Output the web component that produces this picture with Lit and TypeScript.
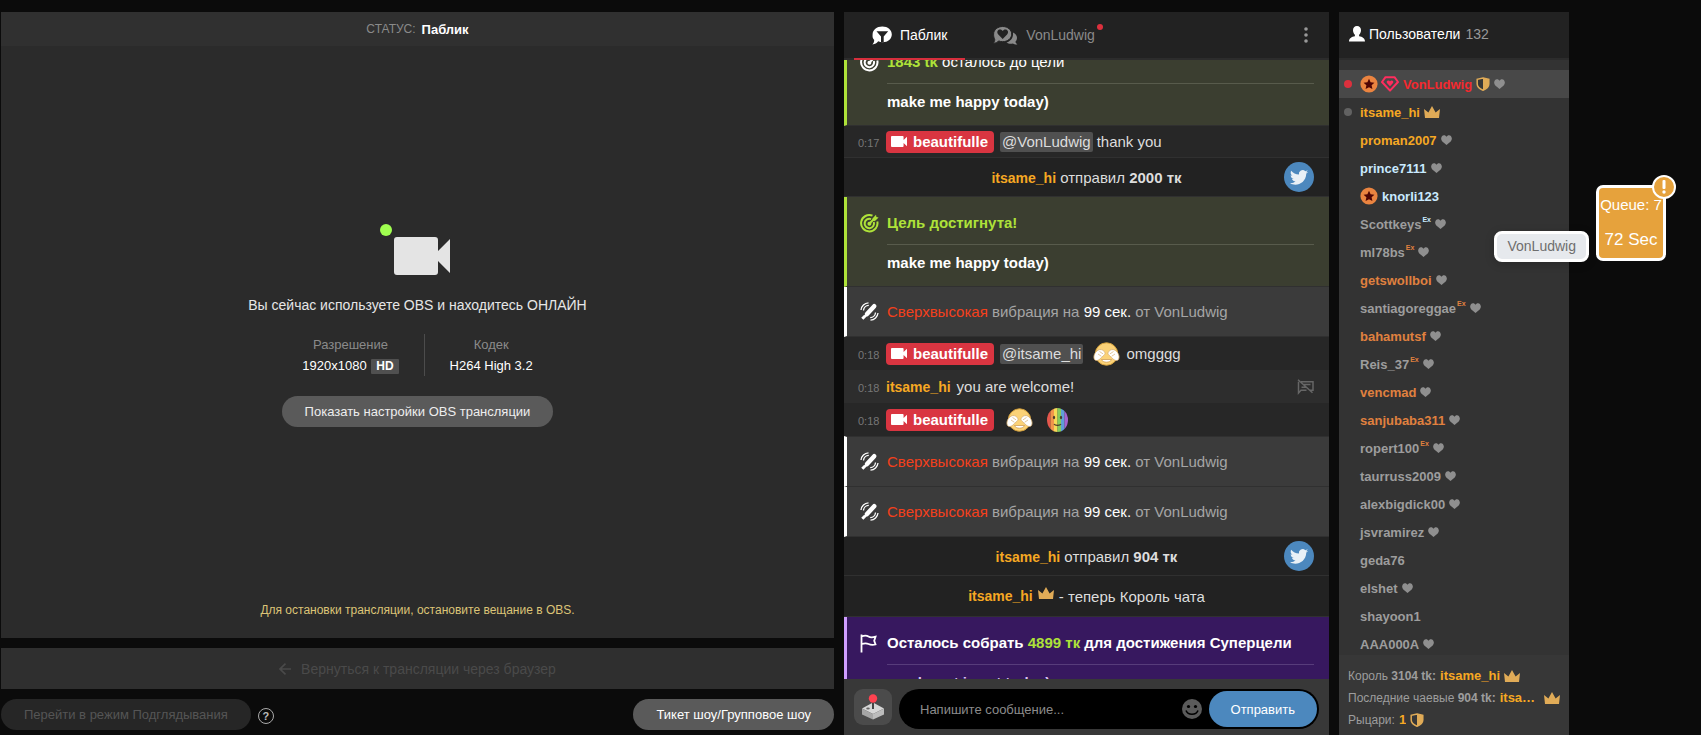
import { LitElement, html, css, svg, nothing, TemplateResult } from "lit";
import { customElement, property, state } from "lit/decorators.js";
import { classMap } from "lit/directives/class-map.js";

const camera = html`<svg class="icon" viewBox="0 0 56 38" aria-hidden="true">
  <path fill="currentColor" d="M3 0h38q3 0 3 3v11L56 2v34L44 24v11q0 3-3 3H3q-3 0-3-3V3q0-3 3-3z" />
</svg>`;

const crown = html`<svg class="crown" width="16" height="12" viewBox="0 0 16 12" aria-hidden="true">
  <path fill="#e0ab57" d="M0 3l4.4 3.6L8 0l3.6 6.6L16 3l-1 9H1z" />
</svg>`;

const shield = html`<svg width="14" height="14" viewBox="0 0 14 14" aria-hidden="true">
  <path fill="#373737" stroke="#e0ab57" stroke-width="1.5" d="M7 1l5.8 1.3V7c0 3-2.8 5-5.8 6.2C4 12 1.200 10 1.200 7V2.300z" />
  <path fill="#e0ab57" d="M7 1l5.800 1.300V7c0 3-2.800 5-5.800 6.200z" />
</svg>`;

const heart = html`<svg width="11" height="10" viewBox="0 0 11 10" aria-hidden="true">
  <path fill="#8f8f8f" d="M5.500 10L1.300 6.400C-1 4 .4.300 3 .2c1.200 0 2 .6 2.500 1.500C6 .8 6.800.2 8 .2c2.600.1 4 3.800 1.700 6.200z" />
</svg>`;

const star = html`<svg width="18" height="18" viewBox="0 0 18 18" aria-hidden="true">
  <circle cx="9" cy="9" r="8.600" fill="#ea8440" />
  <path fill="#4d0505" d="M9 3.800l1.600 3.500 3.800.4-2.800 2.600.8 3.800L9 12.200l-3.400 1.900.8-3.800-2.800-2.600 3.800-.4z" />
</svg>`;

const gem = html`<svg width="18" height="16" viewBox="0 0 18 16" aria-hidden="true">
  <path fill="none" stroke="#ff2d5e" stroke-width="2" stroke-linejoin="round" d="M4.500 1.200h9L17 6l-8 8.600L1 6z" />
  <path fill="#ff2d5e" d="M9 10.200L6.200 7.300C5 5.800 6.100 4.600 7.300 4.600c.8 0 1.300.4 1.700 1 .4-.6.900-1 1.700-1 1.200 0 2.300 1.200 1.100 2.700z" />
</svg>`;

const target = html`<svg width="19" height="19" viewBox="0 0 19 19" fill="none" stroke="currentColor" stroke-width="2" aria-hidden="true">
  <path d="M12.500 1.700A8.200 8.200 0 1 0 17.300 7.500" />
  <path d="M11 5.100A4.700 4.700 0 1 0 13.800 8" />
  <path d="M9 10l5-5" />
  <path fill="currentColor" stroke="none" d="M12.500 4.500L16 .8l.4 2.200 2.200.5-3.600 3.600-2.100-.4zM7.400 9.800a2 2 0 1 1 4 0 2 2 0 0 1-4 0z" />
</svg>`;

const vibration = html`<svg width="19" height="19" viewBox="0 0 19 19" fill="none" stroke="#fff" aria-hidden="true">
  <path stroke-width="4.500" stroke-linecap="round" d="M14.200 4.200L7 12" />
  <path stroke-width="3" d="M5.800 12.200l1.600 1.600M2.300 16.700l3-3" />
  <path stroke-width="1.300" d="M3.500 8.500A5.500 5.500 0 0 1 8.800 3.300M1 8A8 8 0 0 1 8.500.9M15.500 10.500a5.500 5.500 0 0 1-5.300 5.200M18 11a8 8 0 0 1-7.500 7.100" />
</svg>`;

const flag = html`<svg width="17" height="19" viewBox="0 0 17 19" fill="none" stroke="#fff" stroke-width="1.800" aria-hidden="true">
  <path d="M1.500.5v18M1.500 2.500C5 1 7 1.500 8.500 2.500s4 1 7 .2l-1.300 4 1.300 3.800c-3 .8-5 .5-7-.5s-4-1-7 .2" />
</svg>`;

const bird = html`<svg class="bird" width="30" height="30" viewBox="0 0 30 30" role="img" aria-label="Twitter">
  <circle cx="15" cy="15" r="15" fill="#4c88be" />
  <path fill="#e9f0f6" d="M24.200 9.700c-.7.300-1.400.5-2.100.6.800-.5 1.300-1.200 1.600-2-.7.400-1.500.700-2.400.9a3.800 3.800 0 0 0-6.400 3.400c-3.100-.2-5.900-1.600-7.700-3.900-1 1.700-.5 3.900 1.200 5-.6 0-1.200-.2-1.700-.5 0 1.800 1.300 3.400 3 3.700-.5.200-1.100.2-1.700.1.500 1.500 1.900 2.500 3.500 2.600A7.600 7.600 0 0 1 6 21.200c5.700 3.500 15.800.9 16.300-9.600.8-.5 1.400-1.200 1.900-1.900z" />
</svg>`;

const shyFace = html`<svg class="emoji" width="27" height="24" viewBox="0 0 27 24" role="img" aria-label="shy">
  <circle cx="13.500" cy="12" r="11.200" fill="#fbd277" stroke="#d3a03c" />
  <path fill="#fff" stroke="#c8954a" stroke-width=".7" d="M8.500 17.500h10c-1.200 3.600-8.800 3.600-10 0z" />
  <path fill="#fff" stroke="#d8b070" stroke-width=".8" d="M1.500 17.500C0 14.500 1.500 10.500 5 8.200c2-1.200 4.500-.8 6.300 1.300 1 1.400 1 2.600 0 3.400-1.800 1.400-3.300 3.400-5.300 4.900-1.700 1-3.500 1-4.500-.3z" />
  <path fill="#fff" stroke="#d8b070" stroke-width=".8" d="M25.500 17.500c1.500-3 0-7-3.500-9.300-2-1.200-4.500-.8-6.300 1.300-1 1.400-1 2.600 0 3.400 1.800 1.400 3.300 3.400 5.300 4.900 1.700 1 3.500 1 4.500-.3z" />
  <path fill="none" stroke="#d8b070" stroke-width=".7" d="M6.500 9.500l3.600 2.400M5 12l3.400 2.300M20.500 9.500l-3.600 2.400M22 12l-3.400 2.300" />
</svg>`;

const stripes = ["#e4574c", "#f0954b", "#f5da58", "#86cc5c", "#5f9fd8", "#a763cf"];
const rainbowFace = html`<svg class="emoji round" width="21" height="24" viewBox="0 0 21 24" role="img" aria-label="rainbow">
  <defs><clipPath id="face"><ellipse cx="10.500" cy="12" rx="10.500" ry="12" /></clipPath></defs>
  <g clip-path="url(#face)">
    ${stripes.map((c, i) => svg`<rect x=${i * 3.5} y="0" width="3.600" height="24" fill=${c} />`)}
  </g>
  <ellipse cx="7" cy="9.500" rx="1.100" ry="1.700" fill="#4b3a2a" />
  <ellipse cx="14" cy="9.500" rx="1.100" ry="1.700" fill="#4b3a2a" />
  <path fill="none" stroke="#4b3a2a" stroke-width="1.200" d="M7 16c1 1.800 6 1.800 7 0" />
</svg>`;

const muted = html`<svg width="17" height="16" viewBox="0 0 17 16" fill="none" stroke="#666" stroke-width="1.500" aria-hidden="true">
  <path d="M4 2.800h12v8.400h-3M9.500 11.200H4L1.500 14V2.800M6.500 5.500h7M4.500 8.200h4M1 .8l14.500 13" />
</svg>`;

const base = css`
  *, *::before, *::after { box-sizing: border-box; }
  button, input { font: inherit; color: inherit; border: 0; margin: 0; padding: 0; background: none; }
  svg { display: block; flex: none; }
  a { color: inherit; text-decoration: none; }
  ul, ol, dl, dd, p, h2 { margin: 0; padding: 0; list-style: none; font: inherit; }
`;

@customElement("stream-panel")
class StreamPanel extends LitElement {
  static styles = [base, css`
    :host { display: flex; flex-direction: column; gap: 10px; min-width: 0; padding-bottom: 5px; }
    .stage { flex: 1; display: flex; flex-direction: column; background: #2b2b2b; }
    .status { display: flex; align-items: center; justify-content: center; gap: 6px; height: 34px; background: #303030; color: #8a8a8a; font-size: 12px; }
    .status strong { color: #fff; font-size: 13px; }
    .center { flex: 1; display: flex; flex-direction: column; align-items: center; justify-content: center; padding-top: 15px; color: #e6e6e6; }
    .cam { position: relative; width: 56px; height: 38px; margin-left: 8px; color: #e4e4e4; }
    .cam::before { content: ""; position: absolute; left: -14px; top: -13px; width: 12px; height: 12px; border-radius: 50%; background: #a0ff50; }
    .lead { margin-top: 20px; font-size: 14px; line-height: 20px; }
    .facts { display: grid; grid-template-columns: auto auto; margin-top: 19px; text-align: center; font-size: 13px; line-height: 21px; }
    .facts div { padding: 0 25px; }
    .facts div + div { border-left: 1px solid #4c4c4c; }
    .facts dt { color: #8a8a8a; }
    .facts dd { color: #fff; }
    .hd { margin-left: 1px; padding: 0 5px; background: #505050; border-radius: 1px; font-size: 12px; font-weight: bold; line-height: 15px; display: inline-block; }
    .pill { height: 31px; padding: 0 23px; border-radius: 16px; background: #5a5a5a; color: #fff; font-size: 13px; }
    .pill:disabled { background: #262626; color: #555; }
    .center .pill { margin-top: 20px; color: #eee; }
    .hint { padding-bottom: 20px; text-align: center; color: #dcc477; font-size: 12px; line-height: 16px; }
    .back { display: flex; align-items: center; justify-content: center; gap: 10px; height: 41px; background: #2f2f2f; color: #4a4a4a; font-size: 14px; }
    .modes { display: flex; align-items: center; }
    .help { margin: 3px auto 0 7px; width: 16px; height: 16px; border: 1px solid #aaa; border-radius: 50%; color: #bbb; font-size: 11px; font-weight: bold; line-height: 14px; }
  `];
  render() {
    return html`
      <section class="stage">
        <div class="status"><span>СТАТУС:</span><strong>Паблик</strong></div>
        <div class="center">
          <div class="cam">${camera}</div>
          <p class="lead">Вы сейчас используете OBS и находитесь ОНЛАЙН</p>
          <dl class="facts">
            <div><dt>Разрешение</dt><dd>1920x1080 <span class="hd">HD</span></dd></div>
            <div><dt>Кодек</dt><dd>H264 High 3.2</dd></div>
          </dl>
          <button class="pill">Показать настройки OBS трансляции</button>
        </div>
        <p class="hint">Для остановки трансляции, остановите вещание в OBS.</p>
      </section>
      <button class="back" disabled>
        <svg width="12" height="12" viewBox="0 0 12 12" fill="none" stroke="currentColor" stroke-width="1.600" aria-hidden="true"><path d="M12 6H1M6.500.6L1 6l5.500 5.400" /></svg>
        Вернуться к трансляции через браузер
      </button>
      <div class="modes">
        <button class="pill" disabled>Перейти в режим Подглядывания</button>
        <button class="help" aria-label="Справка">?</button>
        <button class="pill">Тикет шоу/Групповое шоу</button>
      </div>`;
  }
}

@customElement("chat-panel")
class ChatPanel extends LitElement {
  @state() private draft = "";
  static styles = [base, css`
    :host { display: flex; flex-direction: column; min-width: 0; min-height: 0; background: #222; color: #ddd; font-size: 15px; }
    .tabs { display: flex; height: 48px; padding: 0 10px; border-bottom: 2px solid #2c2c2c; font-size: 14px; }
    .tab { position: relative; display: flex; align-items: center; gap: 8px; height: 48px; padding: 0 18px 2px; color: #8a8a8a; }
    .tab.active { color: #fff; border-bottom: 2px solid #d72f3d; padding-bottom: 0; }
    .tab + .tab { margin-left: 10px; }
    .tab .dot { position: absolute; right: 10px; top: 12px; width: 6px; height: 6px; border-radius: 50%; background: #dc303d; }
    .tab:not(.active) { padding-right: 10px; }
    .more { margin-left: auto; width: 26px; display: grid; place-items: center; color: #999; }
    .log { flex: 1; min-height: 0; overflow: hidden; }
    .list { margin-top: -24px; }
    .row { display: flex; align-items: center; border-bottom: 1px solid #303030; }
    .msg { gap: 6px; min-height: 32px; padding: 0 15px 0 14px; background: #272727; }
    .msg.alt { background: #2d2d2d; }
    .msg.plain { border: 0; min-height: 33px; }
    .time { color: #777; font-size: 11px; padding-top: 2px; width: 22px; }
    .me { display: flex; align-items: center; gap: 6px; height: 22px; padding: 0 6px 0 5px; border-radius: 4px; background: #d93541; color: #fff; font-weight: bold; }
    .me .icon { width: 16px; height: 11px; }
    .at { height: 20px; margin-right: -2px; padding: 0 2px; border-radius: 2px; background: #505050; line-height: 20px; }
    .emoji { margin-left: 6px; }
    .emoji.round { margin-left: 8px; }
    .mute { margin-left: auto; }
    .name { color: #f6a823; font-weight: bold; font-size: 14px; }
    .tip { display: grid; grid-template-columns: 30px 1fr 30px; height: 39px; padding: 0 15px; text-align: center; }
    .king { justify-content: center; gap: 5px; height: 41px; }
    .king .crown { margin-top: -6px; }
    .card { display: grid; grid-template-columns: 20px 1fr; column-gap: 7px; align-items: center; padding: 0 15px 0 13px; border-left: 3px solid; border-bottom: 1px solid #303030; line-height: 20px; }
    .goal { padding-top: 16px; padding-bottom: 13px; border-left-color: #aee239; background: #3b3e30; color: #fff; }
    .goal b, .accent { color: #aee239; }
    .goal .body { grid-column: 2; margin-top: 11px; padding-top: 8px; border-top: 1px solid #585b4c; font-weight: bold; }
    .goal.super { border-left-color: #cf9dff; background: #37185f; }
    .goal.super .body { border-color: #573c7b; color: #d9c2f5; }
    .goal.super .head { color: #fff; font-weight: bold; }
    .vibe { height: 50px; border-left-color: #fff; background: #3b3b3b; color: #a5a5a5; }
    .plain + .vibe { height: 51px; border-top: 1px solid #303030; }
    .vibe .hot { color: #f5401b; }
    .vibe .sec { color: #fff; }
    .compose { display: flex; align-items: flex-start; gap: 7px; height: 56px; padding: 10px; background: #383838; }
    .games { display: grid; place-items: center; width: 38px; height: 36px; border-radius: 9px; background: #4b4b4b; }
    .field { flex: 1; display: flex; align-items: center; height: 40px; padding: 0 2px 0 21px; border-radius: 20px; background: #000; }
    .field label { display: contents; }
    .field input { flex: 1; min-width: 0; height: 30px; outline: 0; color: #ddd; font-size: 13px; }
    .field input::placeholder { color: #8c8c8c; opacity: 1; }
    .send { height: 36px; margin-left: 7px; padding: 0 22px; border-radius: 18px; background: #4c88be; color: #fff; font-size: 13px; }
  `];

  private goal(head: TemplateResult, body: string, icon: TemplateResult, cls = {}) {
    return html`<li class=${classMap({ card: true, goal: true, ...cls })}>${icon}<div class="head">${head}</div><div class="body">${body}</div></li>`;
  }
  private vibe() {
    return html`<li class="card vibe">${vibration}<div><span class="hot">Сверхвысокая</span> вибрация на <span class="sec">99 сек.</span> от VonLudwig</div></li>`;
  }
  private tip(amount: string) {
    return html`<li class="row tip"><span></span><div><span class="name">itsame_hi</span> отправил <b>${amount}</b></div>${bird}</li>`;
  }
  private own(time: string, content: TemplateResult, plain = false) {
    return html`<li class=${classMap({ row: true, msg: true, plain })}>
      <span class="time">${time}</span><span class="me">${camera}beautifulle</span>${content}</li>`;
  }
  render() {
    return html`
      <div class="tabs">
        <button class="tab active">
          <svg width="20" height="19" viewBox="0 0 20 19" aria-hidden="true"><path fill="#fff" d="M10.300.5c5.500 0 9.500 3.500 9.500 8s-4 7.700-9 7.700c-1.800 0-3.300-.3-4.600-1-1.300 1.900-3.200 2.900-5.800 3.200 1.200-1.300 1.800-2.800 1.800-4.500C.3 12.300.5 10 .6 8.500c0-4.500 4.200-8 9.700-8z" /><path fill="#222" d="M4.500 5.300h11.700l-4.500 5.200v5.800H9V10.500z" /></svg>
          Паблик
        </button>
        <button class="tab">
          <svg width="25" height="19" viewBox="0 0 25 19" aria-hidden="true"><path fill="#8a8a8a" d="M20 6.500c2.500 1 4 3 4 5.300 0 1.600-.6 2.900-1.600 4 .2 1.200 1 2 2.100 2.600-2 .2-3.500-.3-4.500-1-2.300.8-4.700.4-6.500-.9 4.500-1.300 7-5 6.500-10z" /><path fill="#8a8a8a" stroke="#222" d="M9.700.5c5 0 9 3.300 9 7.600s-4 7.600-9 7.600c-1.500 0-2.900-.3-4.100-.8C4.500 16.500 2.500 17.300.3 17.300c1-1.200 1.500-2.500 1.400-4C.8 12 .6 10 .6 8.100.6 3.800 4.700.5 9.700.5z" /><path fill="#222" d="M9.700 13L5.300 8.500C3 5.500 5.300 3.500 7 3.500c1.300 0 2.200.7 2.700 1.600.5-.9 1.400-1.600 2.700-1.600 1.700 0 4 2 1.700 5z" /></svg>
          VonLudwig<span class="dot"></span>
        </button>
        <button class="more" aria-label="Меню"><svg width="4" height="16" viewBox="0 0 4 16" fill="currentColor" aria-hidden="true"><circle cx="2" cy="2" r="1.800" /><circle cx="2" cy="8" r="1.800" /><circle cx="2" cy="14" r="1.800" /></svg></button>
      </div>
      <div class="log"><ol class="list">
        ${this.goal(html`<b>1843 tk</b> осталось до цели`, "make me happy today)", target)}
        ${this.own("0:17", html`<span class="at">@VonLudwig</span><span>thank you</span>`)}
        ${this.tip("2000 тк")}
        ${this.goal(html`<b>Цель достигнута!</b>`, "make me happy today)", html`<span class="accent">${target}</span>`)}
        ${this.vibe()}
        ${this.own("0:18", html`<span class="at">@itsame_hi</span>${shyFace}<span>omgggg</span>`, true)}
        <li class="row msg alt plain"><span class="time">0:18</span><span class="name">itsame_hi</span><span>you are welcome!</span><button class="mute" aria-label="Заглушить">${muted}</button></li>
        ${this.own("0:18", html`${shyFace}${rainbowFace}`, true)}
        ${this.vibe()}${this.vibe()}
        ${this.tip("904 тк")}
        <li class="row king"><span class="name">itsame_hi</span>${crown}<span>- теперь Король чата</span></li>
        ${this.goal(html`Осталось собрать <b>4899 тк</b> для достижения Суперцели`, "one boost is set today)", flag, { super: true })}
      </ol></div>
      <form class="compose" @submit=${(e: Event) => e.preventDefault()}>
        <button type="button" class="games" aria-label="Игры">
          <svg width="24" height="26" viewBox="0 0 24 26" aria-hidden="true"><path fill="#d6d6d6" d="M12 8.500l11 6-11 5.500-11-5.500z" /><path fill="#a5a5a5" d="M1 14.500L12 20v5.500l-11-5z" /><path fill="#bcbcbc" d="M23 14.500L12 20v5.500l11-5z" /><path stroke="#444" stroke-width="2" d="M12 7v8" /><ellipse cx="7" cy="14.500" rx="1.800" ry="1" fill="#666" /><circle cx="12" cy="4.500" r="4.200" fill="#ff4250" /></svg>
        </button>
        <div class="field">
          <label><input aria-label="Сообщение" placeholder="Напишите сообщение..." .value=${this.draft} @input=${(e: Event) => (this.draft = (e.target as HTMLInputElement).value)} /></label>
          <button type="button" aria-label="Смайлы"><svg width="20" height="20" viewBox="0 0 20 20" aria-hidden="true"><circle cx="10" cy="10" r="10" fill="#5b5b5b" /><circle cx="6.500" cy="7.500" r="1.600" /><circle cx="13.500" cy="7.500" r="1.600" /><path fill="none" stroke="#000" stroke-width="1.600" d="M4 11.500c2 5 10 5 12 0" /></svg></button>
          <button class="send">Отправить</button>
        </div>
      </form>`;
  }
}

interface User { name: string; tone?: string; ex?: string; heart?: boolean; star?: boolean; gem?: boolean; shield?: boolean; crown?: boolean; dot?: string; }
const users: User[] = [
  { name: "VonLudwig", tone: "red", star: true, gem: true, shield: true, heart: true, dot: "live" },
  { name: "itsame_hi", tone: "gold", crown: true, dot: "idle" },
  { name: "proman2007", tone: "gold", heart: true },
  { name: "prince7111", tone: "ice", heart: true },
  { name: "knorli123", tone: "ice", star: true },
  { name: "Scottkeys", ex: "ice", heart: true },
  { name: "ml78bs", ex: "orange", heart: true },
  { name: "getswollboi", tone: "orange", heart: true },
  { name: "santiagoreggae", ex: "orange", heart: true },
  { name: "bahamutsf", tone: "orange", heart: true },
  { name: "Reis_37", ex: "orange", heart: true },
  { name: "vencmad", tone: "orange", heart: true },
  { name: "sanjubaba311", tone: "orange", heart: true },
  { name: "ropert100", ex: "orange", heart: true },
  { name: "taurruss2009", heart: true },
  { name: "alexbigdick00", heart: true },
  { name: "jsvramirez", heart: true },
  { name: "geda76" },
  { name: "elshet", heart: true },
  { name: "shayoon1" },
  { name: "AAA000A", heart: true },
];

@customElement("user-panel")
class UserPanel extends LitElement {
  @property({ type: Number }) total = 0;
  static styles = [base, css`
    :host { display: flex; flex-direction: column; min-width: 0; min-height: 0; background: #333; color: #9d9d9d; font-size: 13px; }
    .head { display: flex; align-items: center; gap: 4px; height: 48px; padding: 0 10px 3px; background: #222; border-bottom: 2px solid #2c2c2c; color: #fff; font-size: 14px; }
    .head .total { margin-left: 1px; color: #999; }
    .users { flex: 1; min-height: 0; overflow: hidden; padding-top: 10px; }
    .user { position: relative; display: flex; align-items: center; gap: 4px; height: 28px; padding-left: 21px; font-weight: bold; }
    .user.own { background: #484848; }
    .badges { display: flex; align-items: center; gap: 3px; }
    .dot { position: absolute; left: 5px; top: 10px; width: 8px; height: 8px; border-radius: 50%; }
    .live { background: #dc303d; }
    .idle { background: #626262; }
    .ex { margin: 0 0 9px -3px; font-size: 7px; }
    .red { color: #f5282e; }
    .gold { color: #f6a823; }
    .ice { color: #c9eaff; }
    .orange { color: #e0813f; }
    .foot { display: flex; flex-direction: column; gap: 1px; height: 80px; padding: 10px 9px 0; background: #373737; font-size: 12px; }
    .line { display: flex; align-items: center; gap: 4px; height: 21px; white-space: nowrap; }
    .line .who { min-width: 0; overflow: hidden; text-overflow: ellipsis; color: #f6a823; font-size: 13px; font-weight: bold; }
  `];
  render() {
    return html`
      <h2 class="head">
        <svg width="16" height="16" viewBox="0 0 16 16" fill="#fff" aria-hidden="true"><path d="M8 0c2.500 0 4 1.800 4 4.200 0 1.900-.8 3.500-1.900 4.500v1.500c3.200.6 5.900 2 5.900 5.300H0c0-3.300 2.700-4.700 5.900-5.300V8.700C4.800 7.700 4 6.100 4 4.200 4 1.800 5.500 0 8 0z" /></svg>
        <span>Пользователи</span><span class="total">${this.total}</span>
      </h2>
      <ul class="users">${users.map((u) => html`
        <li class=${classMap({ user: true, own: u.dot === "live" })}>
          ${u.dot ? html`<span class="dot ${u.dot}"></span>` : nothing}
          ${u.star || u.gem ? html`<span class="badges">${u.star ? star : nothing}${u.gem ? gem : nothing}</span>` : nothing}
          <a href="#${u.name}" class=${u.tone ?? ""}>${u.name}</a>
          ${u.ex ? html`<span class="ex ${u.ex}">Ex</span>` : nothing}
          ${u.crown ? crown : nothing}${u.shield ? shield : nothing}${u.heart ? heart : nothing}
        </li>`)}</ul>
      <div class="foot">
        <div class="line"><span>Король <b>3104 tk:</b></span><a class="who" href="#king">itsame_hi</a>${crown}</div>
        <div class="line"><span>Последние чаевые <b>904 tk:</b></span><a class="who" href="#last">itsame_hi</a>${crown}</div>
        <div class="line"><span>Рыцари:</span><a class="who" href="#knights">1</a>${shield}</div>
      </div>`;
  }
}

@customElement("app-root")
class AppRoot extends LitElement {
  static styles = [base, css`
    :host { position: relative; display: grid; grid-template-columns: minmax(0, 1fr) 485px 230px; grid-template-rows: minmax(0, 1fr); gap: 10px; height: 100vh; padding: 12px 132px 0 1px; overflow: hidden; background: #0b0b0b; font-family: "Liberation Sans", Arial, sans-serif; box-sizing: border-box; }
    .queue { position: absolute; right: 35px; top: 185px; width: 70px; height: 76px; border: 3px solid #fff; border-radius: 7px; background: #e6a23c; color: #fff; text-align: center; white-space: nowrap; }
    .queue .count { display: flex; justify-content: center; margin-top: 9px; font-size: 15px; line-height: 16px; }
    .queue .left { margin-top: 17px; font-size: 17px; line-height: 20px; }
    .alert { position: absolute; right: -13px; top: -13px; width: 24px; height: 24px; border: 2px solid #fff; border-radius: 50%; background: #e6a23c; display: grid; place-items: center; }
    .next { position: absolute; right: 112px; top: 231px; height: 31px; padding: 0 10px; border: 3px solid #fff; border-radius: 8px; background: #e6e9ed; color: #6e6e6e; font-size: 14px; line-height: 25px; box-shadow: 0 2px 10px rgba(0, 0, 0, 0.2); }
  `];
  render() {
    return html`
      <stream-panel></stream-panel>
      <chat-panel></chat-panel>
      <user-panel .total=${132}></user-panel>
      <div class="next">VonLudwig</div>
      <div class="queue">
        <div class="count">Queue: 7</div>
        <div class="left">72 Sec</div>
        <span class="alert"><svg width="4" height="14" viewBox="0 0 4 14" fill="#fff" aria-hidden="true"><rect x=".5" width="3" height="9" rx="1" /><circle cx="2" cy="12" r="1.700" /></svg></span>
      </div>`;
  }
}
